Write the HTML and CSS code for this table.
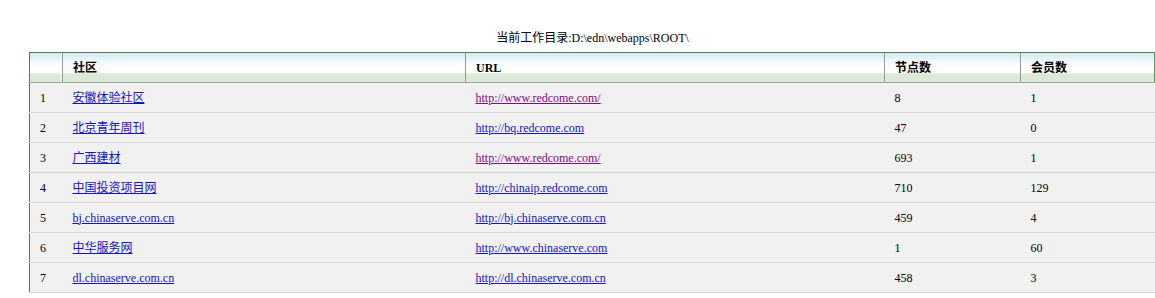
FILE: index.html
```html
<!DOCTYPE html>
<html lang="zh-CN">
<head>
<meta charset="utf-8">
<title>社区列表</title>
<link rel="stylesheet" href="styles.css">
</head>
<body>
<div class="page">
  <div class="caption">当前工作目录:D:\edn\webapps\ROOT\</div>
  <table class="grid">
    <colgroup>
      <col class="c-num"><col class="c-name"><col class="c-url"><col class="c-nodes"><col class="c-members">
    </colgroup>
    <thead>
      <tr>
        <th class="h-first"></th>
        <th>社区</th>
        <th>URL</th>
        <th>节点数</th>
        <th>会员数</th>
      </tr>
    </thead>
    <tbody>
      <tr><td>1</td><td><a href="#">安徽体验社区</a></td><td><a class="visited" href="#">http://www.redcome.com/</a></td><td>8</td><td>1</td></tr>
      <tr><td>2</td><td><a href="#">北京青年周刊</a></td><td><a href="#">http://bq.redcome.com</a></td><td>47</td><td>0</td></tr>
      <tr><td>3</td><td><a href="#">广西建材</a></td><td><a class="visited" href="#">http://www.redcome.com/</a></td><td>693</td><td>1</td></tr>
      <tr><td>4</td><td><a href="#">中国投资项目网</a></td><td><a href="#">http://chinaip.redcome.com</a></td><td>710</td><td>129</td></tr>
      <tr><td>5</td><td><a href="#">bj.chinaserve.com.cn</a></td><td><a href="#">http://bj.chinaserve.com.cn</a></td><td>459</td><td>4</td></tr>
      <tr><td>6</td><td><a href="#">中华服务网</a></td><td><a href="#">http://www.chinaserve.com</a></td><td>1</td><td>60</td></tr>
      <tr><td>7</td><td><a href="#">dl.chinaserve.com.cn</a></td><td><a href="#">http://dl.chinaserve.com.cn</a></td><td>458</td><td>3</td></tr>
    </tbody>
  </table>
</div>
</body>
</html>
```
FILE: styles.css
```css
html, body {
  margin: 0;
  padding: 0;
  background: #ffffff;
  overflow: hidden;
}
body {
  font-family: "Liberation Serif", "Noto Sans CJK SC", serif;
  font-size: 12px;
  color: #000;
}
.page {
  padding-top: 31px;
  margin-left: 29px;
  width: 1125px;
}
.caption {
  text-align: center;
  height: 14px;
  line-height: 14px;
  margin-bottom: 7px;
  padding-left: 2px;
}
.grid {
  width: 1125px;
  table-layout: fixed;
  border-collapse: collapse;
}
.c-num { width: 33px; }
.c-name { width: 403px; }
.c-url { width: 419px; }
.c-nodes { width: 136px; }
.c-members { width: 134px; }

.grid thead th {
  height: 29px;
  padding: 0 0 0 10px;
  text-align: left;
  font-weight: bold;
  font-size: 12px;
  border-top: 1px solid #4d7d55;
  border-bottom: 1px solid #9aa79a;
  border-left: 1px solid #8f9c8f;
  background: linear-gradient(to bottom, #d4eaf1 0%, #eaf5f8 22%, #ffffff 45%, #ffffff 66%, #dbe8d7 70%, #dde9da 100%);
  vertical-align: middle;
  line-height: 14px;
}
.grid thead th.h-first {
  border-left: 1px solid #4d7d55;
  box-shadow: inset -1px 0 0 #ffffff;
}
.grid thead th:last-child {
  border-right: 1px solid #6e8f72;
}
.grid tbody td {
  height: 29px;
  padding: 0 0 0 10px;
  background: #f1f1f1;
  border-bottom: 1px solid #d6d6d6;
  vertical-align: middle;
  line-height: 14px;
  white-space: nowrap;
}
.grid tbody td:first-child {
  border-left: 1px solid #4d7d55;
  padding-left: 10px;
}
.grid a {
  color: #1414b8;
  text-decoration: underline;
}
.grid a.visited {
  color: #7d0c7d;
}
```
